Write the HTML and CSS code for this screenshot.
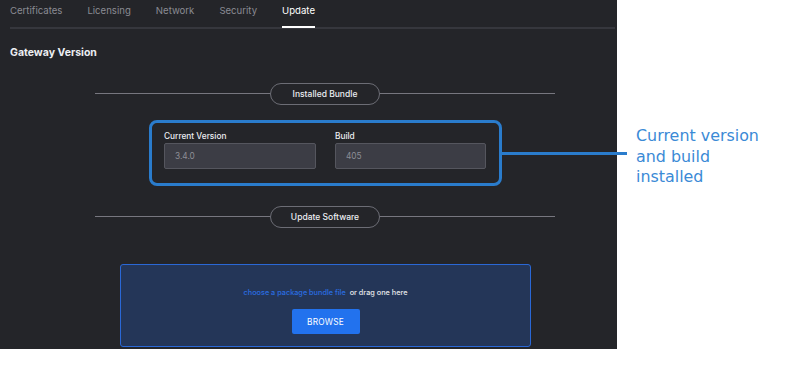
FILE: index.html
```html
<!DOCTYPE html>
<html>
<head>
<meta charset="utf-8">
<link rel="stylesheet" href="styles.css">
</head>
<body>
<div class="page">
  <div class="panel">
    <nav class="tabs">
      <span class="tab">Certificates</span>
      <span class="tab">Licensing</span>
      <span class="tab">Network</span>
      <span class="tab">Security</span>
      <span class="tab active">Update</span>
    </nav>
    <h2 class="title">Gateway Version</h2>
    <div class="divider"><span class="pill">Installed Bundle</span></div>
    <div class="installed">
      <div class="field">
        <label>Current Version</label>
        <div class="input">3.4.0</div>
      </div>
      <div class="field">
        <label>Build</label>
        <div class="input">405</div>
      </div>
    </div>
    <div class="divider second"><span class="pill">Update Software</span></div>
    <div class="drop">
      <p class="drop-text"><a class="link">choose a package bundle file</a> or drag one here</p>
      <button class="browse">BROWSE</button>
    </div>
  </div>
  <div class="callout-line"></div>
  <div class="callout">Current version<br>and build<br>installed</div>
</div>
</body>
</html>
```

FILE: styles.css
```css
* { box-sizing: border-box; }
html, body { margin: 0; padding: 0; background: #fff; }
body { font-family: Inter, "Open Sans", sans-serif; }
.page { position: relative; width: 802px; height: 369px; }
.panel {
  width: 617px; height: 349px; background: #242529;
  display: flex; flex-direction: column; overflow: hidden;
}
.tabs {
  display: flex; gap: 0; margin: 0 2px 0 10px; height: 29px;
  border-bottom: 2px solid #36373d; align-items: flex-start;
}
.tab {
  font-size: 9.6px; color: #8a8b93; padding-top: 5px; height: 28px; margin-right: 25px;
}
.active { color: #fff; border-bottom: 2px solid #fff; }
.title { font-size: 10.5px; font-weight: 700; color: #eceef2; margin: 17px 0 0 10px; line-height: 14px; }
.divider {
  position: relative; margin: 23px 62px 0 95px; height: 22px; display: flex; justify-content: center; align-items: center;
}
.divider::before {
  content: ""; position: absolute; left: 0; right: 0; top: 10px; height: 1px; background: #77777f;
}
.pill {
  position: relative; width: 110px; height: 22px; border: 1px solid #6c6d75; border-radius: 11px;
  background: #242529; color: #eceef2; font-size: 8.5px; font-weight: 500;
  display: flex; align-items: center; justify-content: center;
}
.installed {
  margin: 15px 0 0 149px; width: 353px; height: 66px; border: 3px solid #2a7ccc; border-radius: 8px;
  display: flex; gap: 19px; padding: 8px 0 0 12px;
}
.field { display: flex; flex-direction: column; }
.field label { font-size: 8.3px; color: #eceef2; height: 12px; font-weight: 500; }
.input {
  width: 152px; height: 26px; background: #3c3d45; border: 1px solid #55565e; border-radius: 2px;
  color: #8d8e96; font-size: 8.3px; padding: 7px 0 0 10px;
}
.field + .field .input { width: 151px; }
.second { margin-top: 20px; }
.drop {
  margin: 36px 0 0 120px; width: 411px; height: 83px; background: #243658; border: 1px solid #2a68d6;
  border-radius: 3px; display: flex; flex-direction: column; align-items: center; padding-top: 23px;
}
.drop-text { margin: 0; font-size: 7.3px; color: #e4e6ea; font-weight: 500; }
.link { color: #2a6de0; margin-right: 2px; }
.browse {
  margin-top: 12px; width: 68px; height: 25px; background: #2272ee; border: none; border-radius: 2px;
  color: #fff; font-family: inherit; font-size: 8.3px; letter-spacing: 0.2px;
}
.callout-line { position: absolute; left: 502px; top: 152px; width: 125px; height: 3px; background: #2a7ccc; }
.callout {
  position: absolute; left: 636px; top: 126px; font-family: "DejaVu Sans", Verdana, sans-serif;
  font-size: 15.9px; line-height: 20.5px; color: #3b8ad6;
}
```
